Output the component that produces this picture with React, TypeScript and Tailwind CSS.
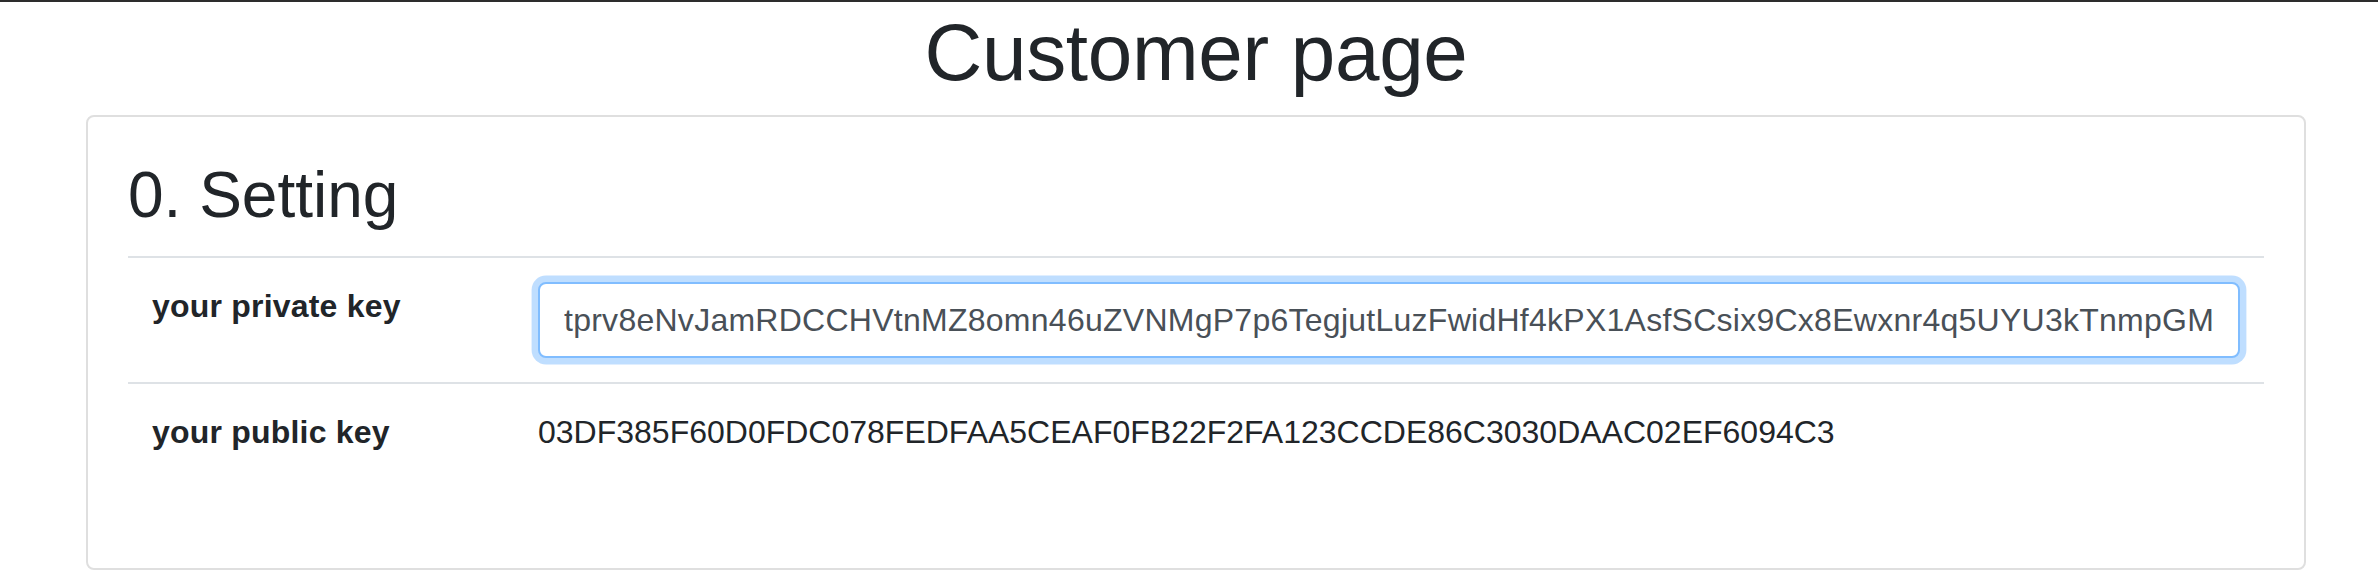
const PRIVATE_KEY =
  'tprv8eNvJamRDCCHVtnMZ8omn46uZVNMgP7p6TegjutLuzFwidHf4kPX1AsfSCsix9Cx8Ewxnr4q5UYU3kTnmpGM';
const PUBLIC_KEY = '03DF385F60D0FDC078FEDFAA5CEAF0FB22F2FA123CCDE86C3030DAAC02EF6094C3';

export default function App() {
  return (
    <div className="min-h-screen bg-white font-['Liberation_Sans',Arial,sans-serif] text-[#212529]">
      {/* top bar */}
      <div className="h-[2px] bg-[#2d2d2d]" />

      <div className="ml-[86px] w-[2220px]">
        <h1 className="mt-[3px] mb-[14px] text-center text-[80px] leading-[96px] font-normal tracking-[-0.3px]">
          Customer page
        </h1>

        {/* Setting card */}
        <div className="rounded-[8px] border-2 border-[#dfdfdf] px-[40px] pt-[40px] pb-[88px]">
          <h2 className="mb-[22px] text-[64px] leading-[77px] font-normal">0. Setting</h2>

          <div className="grid grid-cols-[386px_1fr]">
            {/* private key row */}
            <div className="border-t-2 border-[#dee2e6] p-[24px] text-[32px] leading-[48px] font-bold tracking-[0.2px]">
              your private key
            </div>
            <div className="border-t-2 border-[#dee2e6] p-[24px]">
              <input
                readOnly
                value={PRIVATE_KEY}
                className="h-[76px] w-full rounded-[8px] border-2 border-[#80bdff] bg-white px-[24px] text-[32px] tracking-[0.26px] text-[#495057] shadow-[0_0_0_6.4px_rgba(0,123,255,0.25)] outline-none"
              />
            </div>

            {/* public key row */}
            <div className="border-t-2 border-[#dee2e6] p-[24px] text-[32px] leading-[48px] font-bold tracking-[0.2px]">
              your public key
            </div>
            <div className="border-t-2 border-[#dee2e6] p-[24px] text-[32px] leading-[48px]">
              {PUBLIC_KEY}
            </div>
          </div>
        </div>
      </div>
    </div>
  );
}
